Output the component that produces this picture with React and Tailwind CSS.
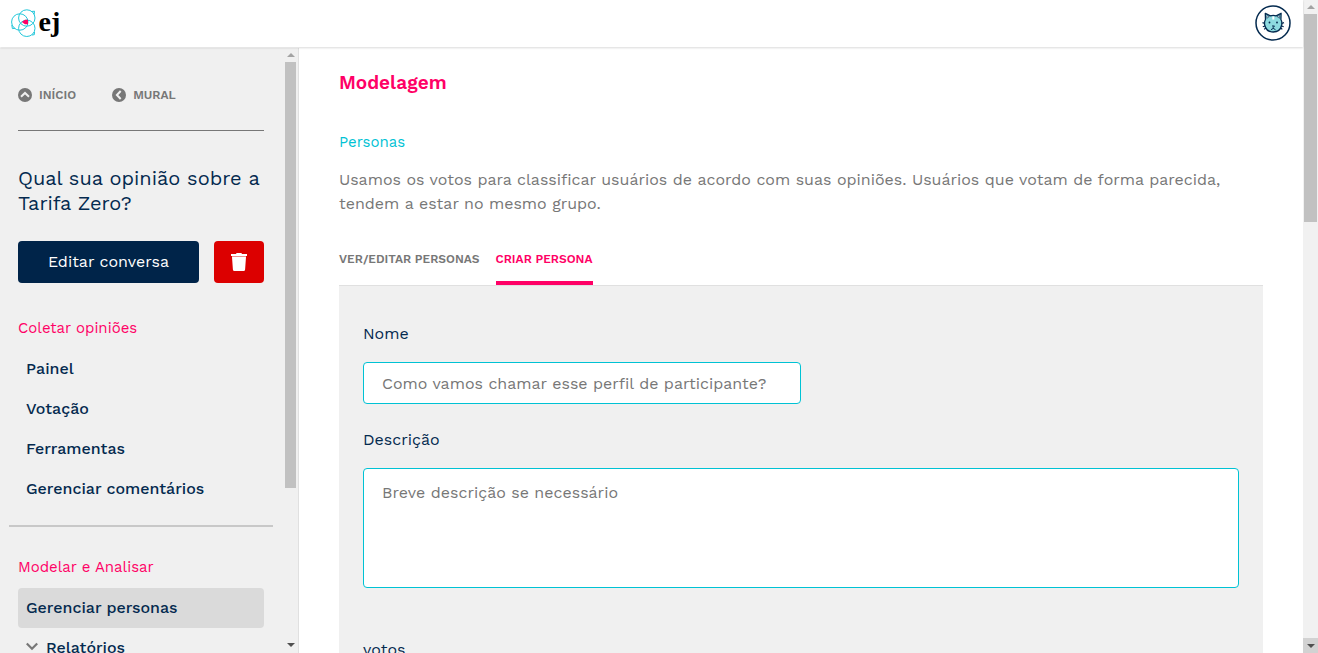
import React from "react";

function Logo() {
  return (
    <svg viewBox="0 0 50 32" className="h-8 w-[50px]" aria-hidden="true">
      <g fill="none" stroke="#22c7da" strokeWidth="1">
        <circle cx="9.8" cy="15" r="8.2" />
        <circle cx="16.8" cy="11" r="8.2" />
        <circle cx="16.8" cy="21.300" r="8.200" />
        <path d="M21.500 4.500l3-.3-.4 3.300M1.800 18l.6 3.600 2.600-.3M22 28l2.300-.3.2-2.800" />
      </g>
      <path d="M11.800 15l3.200-2.300h3v4.600h-3z" fill="#ff0066" />
      <text x="28.500" y="23.500" fontSize="28" fontWeight="700" className="font-['Liberation_Serif',serif]">ej</text>
    </svg>
  );
}

function CatAvatar() {
  return (
    <svg viewBox="0 0 36 36" className="size-9" aria-hidden="true">
      <circle cx="18" cy="18" r="17" fill="#fff" stroke="#042a4f" strokeWidth="1.500" />
      <path d="M10.500 14.500L10.300 8.300l5 2.500q3-.9 5.800 0l5-2.500-.2 6.200q1.500 2.500.8 5.500-1.500 7-8.500 7t-8.500-7q-.7-3 .8-5.500z" fill="#8ddbe0" stroke="#042a4f" strokeWidth="1.300" strokeLinejoin="round" />
      <path d="M11.800 13.300l.1-2.800 2.300 1.200zM24.600 13.300l-.1-2.800-2.300 1.200z" fill="#fff" stroke="#042a4f" strokeWidth=".6" />
      <path d="M17.300 11.500h2v3h-2z" fill="#fff" />
      <path d="M10 18.500l-2.500-.9M10 21l-2.200.8M10.700 23l-1.500 1.400M26.500 18.500l2.500-.9M26.500 21l2.200.8M25.800 23l1.500 1.400" stroke="#042a4f" strokeWidth="1.200" />
      <circle cx="14.500" cy="17.500" r=".9" fill="#042a4f" />
      <circle cx="22" cy="17.500" r=".9" fill="#042a4f" />
      <path d="M17 21h2.500l-1.250 1.300v1.200M16 24.700l2.250-1.300 2.250 1.300" fill="none" stroke="#042a4f" strokeWidth="1" />
    </svg>
  );
}

function CircleChevron({ left }) {
  return (
    <svg viewBox="0 0 14 14" className="size-[14px]" aria-hidden="true">
      <circle cx="7" cy="7" r="7" fill="#777" />
      <path d={left ? "M8.700 3L4.900 7l3.800 4" : "M3 8.700L7 4.900l4 3.800"} fill="none" stroke="#f0f0f0" strokeWidth="2" />
    </svg>
  );
}

function Arrow({ down, dark }) {
  return (
    <svg viewBox="0 0 8 4" className="h-1 w-2" aria-hidden="true">
      <path d={down ? "M0 0h8L4 4z" : "M0 4h8L4 0z"} fill={dark ? "#505050" : "#a3a3a3"} />
    </svg>
  );
}

function MenuItem({ children, active }) {
  return (
    <li>
      <a
        href="#"
        className={
          "flex h-10 items-center gap-2 rounded px-2 text-base font-medium text-[#042a4f] " +
          (active ? "bg-[#dadada]" : "")
        }
      >
        {children}
      </a>
    </li>
  );
}

function Sidebar() {
  return (
    <aside className="flex w-[299px] shrink-0 border-r border-[#e0e0e0] bg-[#f0f0f0]">
      <div className="min-w-0 flex-1 overflow-hidden pr-3 pl-[9px]">
        <div className="px-[9px]">
          <nav className="flex gap-9 border-b border-[#777] pt-[39px] pb-[27px] text-xs leading-4 font-semibold text-[#777]">
            <a href="#" className="flex items-center gap-[7px]"><CircleChevron />INÍCIO</a>
            <a href="#" className="flex items-center gap-[7px]"><CircleChevron left />MURAL</a>
          </nav>
          <h2 className="mt-[35px] text-xl leading-[25px] text-[#042a4f]">Qual sua opinião sobre a Tarifa Zero?</h2>
          <div className="mt-[25px] flex gap-[15px]">
            <button type="button" className="h-[42px] flex-1 rounded bg-[#002449] text-base text-white">Editar conversa</button>
            <button type="button" aria-label="Excluir conversa" className="flex h-[42px] w-[50px] items-center justify-center rounded bg-[#dc0000]">
              <svg viewBox="0 0 16 18" className="h-[18px] w-4" aria-hidden="true">
                <path d="M0 1h5l.6-1h4.800l.6 1h5v2H0zM1 4h14l-.9 12.500q-.1 1.500-1.500 1.500H3.400q-1.400 0-1.500-1.500z" fill="#fff" />
                <path d="M1 3h14v1H1z" fill="#f08c8c" />
              </svg>
            </button>
          </div>
          <h3 className="mt-[33px] text-[15px] leading-6 text-[#ff0066]">Coletar opiniões</h3>
          <ul className="mt-[9px]">
            <MenuItem>Painel</MenuItem>
            <MenuItem>Votação</MenuItem>
            <MenuItem>Ferramentas</MenuItem>
            <MenuItem>Gerenciar comentários</MenuItem>
          </ul>
        </div>
        <hr className="mt-4 border-t-2 border-[#c8c8c8]" />
        <div className="px-[9px]">
          <h3 className="mt-7 text-[15px] leading-6 text-[#ff0066]">Modelar e Analisar</h3>
          <ul className="mt-[9px]">
            <MenuItem active>Gerenciar personas</MenuItem>
            <MenuItem>
              <svg viewBox="0 0 12 12" className="size-3" aria-hidden="true">
                <path d="M.8 1.500L6 6.700l5.200-5.200" fill="none" stroke="#777" strokeWidth="2.200" />
              </svg>
              Relatórios
            </MenuItem>
          </ul>
        </div>
      </div>
      <div className="flex w-[13px] flex-col pr-[2px]" aria-hidden="true">
        <div className="flex h-[14px] items-center justify-center"><Arrow /></div>
        <div className="flex-1"><div className="h-[74%] bg-[#c1c1c1]" /></div>
        <div className="flex h-4 items-center justify-center"><Arrow down dark /></div>
      </div>
    </aside>
  );
}

function Main() {
  return (
    <main className="min-w-0 flex-1 overflow-hidden px-10">
      <h1 className="mt-[23px] text-[19px] leading-6 font-semibold text-[#ff0066]">Modelagem</h1>
      <h2 className="mt-[35px] text-[15px] leading-6 text-[#00c2d4]">Personas</h2>
      <p className="mt-[14px] text-base leading-6 text-[#777]">
        Usamos os votos para classificar usuários de acordo com suas opiniões. Usuários que votam de forma parecida,
        tendem a estar no mesmo grupo.
      </p>
      <div role="tablist" className="mt-[31px] flex gap-4 text-xs leading-6 font-semibold text-[#777]">
        <button type="button" role="tab" className="h-[38px] pb-[14px]">VER/EDITAR PERSONAS</button>
        <button type="button" role="tab" aria-selected="true" className="h-[38px] border-b-4 border-[#ff0066] pb-[10px] text-[#ff0066]">CRIAR PERSONA</button>
      </div>
      <form className="border-t border-[#e0e0e0] bg-[#f0f0f0] px-6 pt-9 pb-12 text-[#042a4f]">
        <label htmlFor="nome" className="block text-base leading-6">Nome</label>
        <input id="nome" type="text" placeholder="Como vamos chamar esse perfil de participante?" className="mt-4 block h-[42px] w-1/2 rounded border border-[#00c2d4] bg-white px-[18px] text-base placeholder:text-[#777]" />
        <label htmlFor="descricao" className="mt-6 block text-base leading-6">Descrição</label>
        <textarea id="descricao" placeholder="Breve descrição se necessário" className="mt-4 block h-[120px] w-full resize-none rounded border border-[#00c2d4] bg-white px-[18px] py-3 text-base leading-6 placeholder:text-[#777]" />
        <label htmlFor="votos" className="mt-[50px] block text-base leading-6">votos</label>
        <input id="votos" type="text" className="mt-4 block h-[42px] w-1/2 rounded border border-[#00c2d4] bg-white px-[18px]" />
      </form>
    </main>
  );
}

export default function App() {
  return (
    <div className="flex h-screen overflow-hidden bg-white font-['Work_Sans','Inter',sans-serif]">
      <div className="flex min-w-0 flex-1 flex-col">
        <header className="z-10 flex h-[47px] shrink-0 items-center justify-between bg-white pr-3 pb-px pl-[10px] shadow-[0_1px_2px_rgba(0,0,0,0.15)]">
          <a href="#" aria-label="ej"><Logo /></a>
          <button type="button" aria-label="Perfil"><CatAvatar /></button>
        </header>
        <div className="flex min-h-0 flex-1 pt-px">
          <Sidebar />
          <Main />
        </div>
      </div>
      <div className="flex w-[15px] shrink-0 flex-col bg-[#f1f1f1]" aria-hidden="true">
        <div className="flex h-[14px] items-center justify-center"><Arrow /></div>
        <div className="flex-1 px-px"><div className="h-1/3 bg-[#c1c1c1]" /></div>
        <div className="flex h-[15px] items-center justify-center bg-[#d2d2d2]"><Arrow down dark /></div>
      </div>
    </div>
  );
}
